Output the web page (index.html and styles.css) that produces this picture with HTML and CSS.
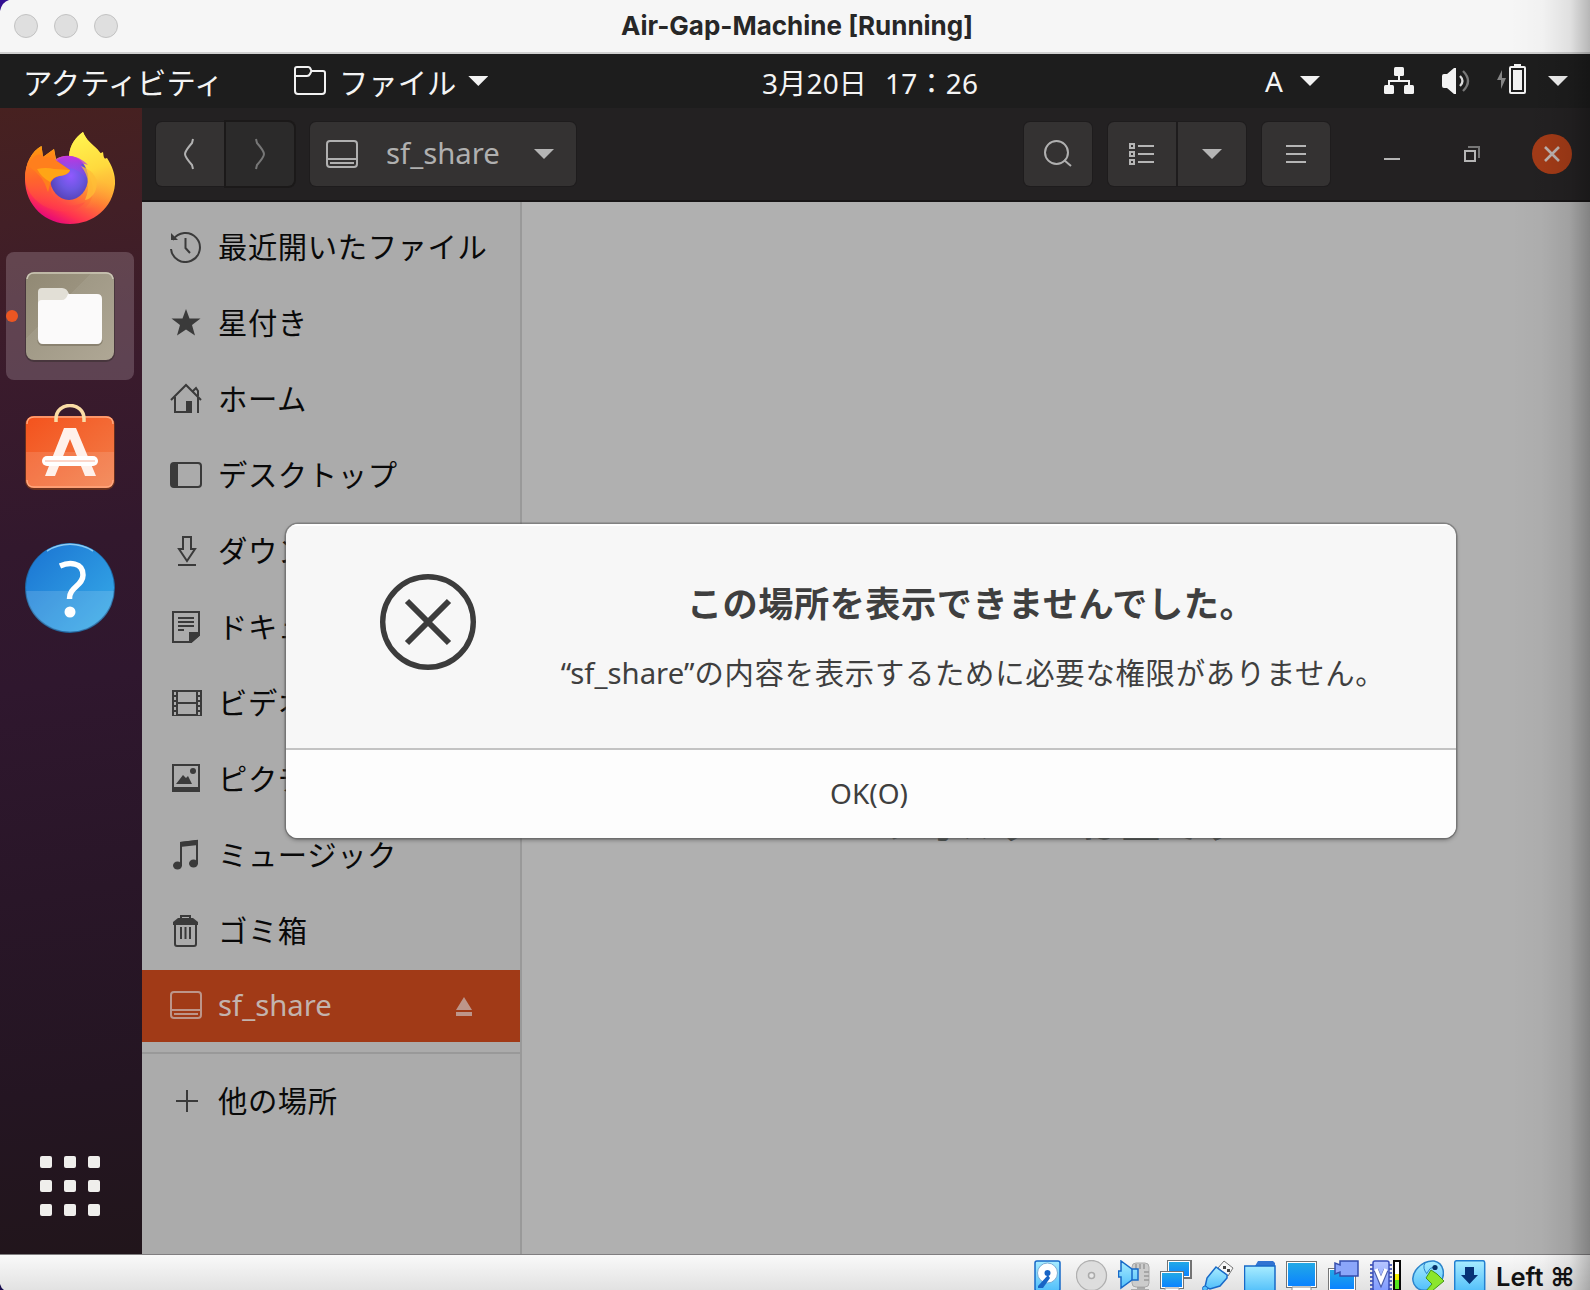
FILE: index.html
```html
<!DOCTYPE html>
<html lang="ja">
<head>
<meta charset="utf-8">
<title>Air-Gap-Machine [Running]</title>
<link rel="stylesheet" href="styles.css">
</head>
<body>
<div class="vm">
  <header class="titlebar">
    <div class="lights"><i></i><i></i><i></i></div>
    <h1>Air-Gap-Machine [Running]</h1>
  </header>

  <nav class="topbar">
    <span class="activities">アクティビティ</span>
    <div class="appmenu">
      <svg width="32" height="30" viewBox="0 0 32 30" fill="none" stroke="#f2f2f2" stroke-width="2"><path d="M1 3Q1 1 3 1H14Q16 1 16.500 3L17.500 5H29Q31 5 31 7V25Q31 28 28 28H4Q1 28 1 25ZM1 10H13Q15 10 16 8L17.500 5"/></svg>
      <span>ファイル</span>
      <b class="caret"></b>
    </div>
    <span class="clock">3月20日<em></em>17：26</span>
    <div class="input"><span>A</span><b class="caret"></b></div>
    <div class="system">
      <svg class="net" width="30" height="28" viewBox="0 0 30 28" fill="#f2f2f2"><rect x="10" width="10" height="9" rx="1.500"/><rect y="18" width="10" height="9" rx="1.500"/><rect x="20" y="18" width="10" height="9" rx="1.500"/><path d="M14 8h2v5h10v6h-2v-4H6v4H4v-6h10z"/></svg>
      <svg class="vol" width="30" height="28" viewBox="0 0 30 28" fill="none"><path d="M0 9Q0 7 2 7H5L12 1H14V27H12L5 21H2Q0 21 0 19Z" fill="#f2f2f2"/><path d="M18 9Q23 14 18 19" stroke="#ddd" stroke-width="2.300"/><path d="M21 4Q31 14 21 24" stroke="#777" stroke-width="2.300"/></svg>
      <svg class="bat" width="30" height="30" viewBox="0 0 30 30"><path d="M5 6L0 16H4V25L9 14H5Z" fill="#858585"/><path d="M17 0h7v3h-7z" fill="#f2f2f2"/><rect x="13" y="3" width="15" height="26" rx="1" fill="none" stroke="#f2f2f2" stroke-width="2"/><path d="M16 6h9v20h-9z" fill="#f2f2f2"/></svg>
      <b class="caret"></b>
    </div>
  </nav>

  <main class="desktop">
    <aside class="dock">
      <div class="tile firefox">
        <svg width="92" height="92" viewBox="0 0 92 92">
          <defs>
            <linearGradient id="ffBody" x1=".8" y1=".1" x2=".35" y2="1"><stop offset="0" stop-color="#fff04b"/><stop offset=".35" stop-color="#ffc532"/><stop offset=".6" stop-color="#ff7b34"/><stop offset=".85" stop-color="#ff3250"/><stop offset="1" stop-color="#e5067c"/></linearGradient>
            <linearGradient id="ffFlame" x1=".4" y1="0" x2=".6" y2="1"><stop offset="0" stop-color="#fff44f"/><stop offset=".5" stop-color="#ffd93d"/><stop offset="1" stop-color="#ff8b3d" stop-opacity="0"/></linearGradient>
            <linearGradient id="ffHead" x1=".2" y1="0" x2=".3" y2="1"><stop offset="0" stop-color="#ff9a0e"/><stop offset=".5" stop-color="#ff652c"/><stop offset="1" stop-color="#ff4247" stop-opacity=".3"/></linearGradient>
            <radialGradient id="ffGlobe" cx=".55" cy=".45" r=".7"><stop offset="0" stop-color="#9059ff"/><stop offset=".45" stop-color="#6b57e0"/><stop offset="1" stop-color="#4b3aa4"/></radialGradient>
            <linearGradient id="ffTop" x1="0" y1="0" x2="0" y2="1"><stop offset="0" stop-color="#c735e0"/><stop offset="1" stop-color="#9047ee" stop-opacity="0"/></linearGradient>
          </defs>
          <path d="M1 47C1 31 8 19 17.500 14L19 25L30 17L32 27Q37 24 45 24C46 12 52 5 59 0C62 8 68 12 74 18L75 22L79 20L80 27L83 26C88 34 91.500 42 91 52C89 76 69 92 46 92C22 92 1 74 1 47Z" fill="url(#ffBody)"/>
          <path d="M45 24C46 12 52 5 59 0C62 8 68 12 74 18C82 27 90 38 90 51C89 72 77 78 61 76C76 64 70 38 45 24Z" fill="url(#ffFlame)"/>
          <path d="M1 47C1 31 8 19 17.500 14L19 25L30 17L32 29L46 39L28 49C23 70 41 79 61 70C50 88 6 80 1 47Z" fill="url(#ffHead)"/>
          <ellipse cx="45" cy="46" rx="19" ry="22" fill="url(#ffGlobe)"/>
          <path d="M31 28C41 20 56 24 64 33Q58 31 57 33Q63 39 64 49Q55 36 44 36Z" fill="url(#ffTop)"/>
          <path d="M4 34Q12 17 20 25Q27 25 33 29L46 38Q45 43 35 44Q29 45 26 52L24 60Q20 44 4 34Z" fill="#ff7f1d"/>
          <path d="M13 37Q22 35 30 37L46 38Q45 43 35 44Q29 45 26 50Q17 45 13 37Z" fill="#ffa516"/>
          <path d="M57 34Q78 42 71 60Q67 67 61 68Q69 49 57 34Z" fill="#ffbd35" opacity=".75"/>
        </svg>
      </div>
      <div class="tile files active">
        <u></u>
        <svg width="90" height="92" viewBox="0 0 90 92">
          <defs><linearGradient id="fBg" x1="0" y1="0" x2="1" y2="1"><stop offset="0" stop-color="#918974"/><stop offset=".38" stop-color="#9a927e"/><stop offset=".38" stop-color="#a09986"/><stop offset="1" stop-color="#afa795"/></linearGradient></defs>
          <rect y="1" width="90" height="90" rx="9" fill="#3c2f33" opacity=".65"/>
          <rect x="1" y="1" width="88" height="88" rx="8" fill="url(#fBg)"/>
          <path d="M2 8Q3 2 9 2H81Q87 2 88 8" fill="none" stroke="#cdc7b7" stroke-width="1.500"/>
          <path d="M13 69Q14 74 18 74H71Q76 74 77 69" fill="none" stroke="#8a8270" stroke-width="2"/>
          <path d="M13 21Q13 17 17 17H37Q42 17 44 23H72V35H13Z" fill="#e2dfd6"/>
          <path d="M13 33Q13 29 17 29H37Q41 29 43 23H72Q77 23 77 28V67Q77 73 72 73H18Q13 73 13 67Z" fill="#fbfafa"/>
        </svg>
      </div>
      <div class="tile shop">
        <svg width="90" height="88" viewBox="0 0 90 88">
          <defs><linearGradient id="bag" x1="0" y1="0" x2="1" y2="1"><stop offset="0" stop-color="#f4521c"/><stop offset="1" stop-color="#f27f4b"/></linearGradient></defs>
          <rect y="12" width="90" height="74" rx="9" fill="#69301d"/>
          <rect x="1" y="12" width="88" height="72" rx="8" fill="url(#bag)"/>
          <path d="M1 48H89V76Q89 84 81 84H9Q1 84 1 76Z" fill="#fff" opacity=".12"/>
          <path d="M2 20Q2 13 9 13H81Q88 13 88 20M2 76Q2 83 9 83H81Q88 83 88 76" fill="none" stroke="#ffa77d" stroke-width="1.400"/>
          <path d="M31 18V15C31 -3 59 -3 59 15V18" fill="none" stroke="#fadca5" stroke-width="3.500"/>
          <path d="M39 24H51L71 72H60L45 35L30 72H20Z" fill="#fff1eb"/>
          <rect x="17" y="52" width="56" height="10" rx="5" fill="#fff"/>
          <path d="M20 57H70" stroke="#fbd7cb" stroke-width="2"/>
        </svg>
      </div>
      <div class="tile help">
        <svg width="90" height="92" viewBox="0 0 90 92">
          <defs><linearGradient id="hb" x1="0" y1="0" x2="1" y2="1"><stop offset="0" stop-color="#1a73d2"/><stop offset="1" stop-color="#37ade9"/></linearGradient></defs>
          <circle cx="45" cy="46" r="45" fill="#1f659e"/><circle cx="45" cy="45.500" r="44" fill="url(#hb)"/>
          <path d="M1 49H89A44 41 0 0 1 1 49Z" fill="#fff" opacity=".14"/>
          <path d="M22 9A43 43 0 0 1 68 9" fill="none" stroke="#8ccbf2" stroke-width="1.500"/>
          <path d="M35 24C44 20 58 20 58 33C58 44 44 45 44.500 57" fill="none" stroke="#fff" stroke-width="5.500"/><circle cx="45" cy="70" r="5.500" fill="#fff"/>
        </svg>
      </div>
      <div class="apps"><i></i><i></i><i></i><i></i><i></i><i></i><i></i><i></i><i></i></div>
    </aside>

    <section class="window">
      <div class="headerbar">
        <div class="btn back"><svg width="12" height="32" viewBox="0 0 12 32"><path d="M10 1L9 5Q2 13 2 16T9 27L10 31" fill="none" stroke="#b2b2b2" stroke-width="2"/></svg></div>
        <div class="btn fwd"><svg width="12" height="32" viewBox="0 0 12 32"><path d="M2 1L3 5Q10 13 10 16T3 27L2 31" fill="none" stroke="#777" stroke-width="2"/></svg></div>
        <div class="btn path">
          <svg width="32" height="28" viewBox="0 0 32 28" fill="none" stroke="#b0b0b0" stroke-width="2"><rect x="1" y="1" width="30" height="26" rx="3"/><path d="M1 19H31M4 23H28"/></svg>
          <span>sf_share</span><b class="caret"></b>
        </div>
        <div class="btn search"><svg width="28" height="28" viewBox="0 0 28 28" fill="none" stroke="#b0b0b0" stroke-width="2"><circle cx="12.500" cy="12.500" r="11.500"/><path d="M20 20L27 26"/></svg></div>
        <div class="btn list"><svg width="26" height="24" viewBox="0 0 26 24" fill="none" stroke="#b5b5b5" stroke-width="2"><path d="M1 2h4v4h-4zM1 10h4v4h-4zM1 18h4v4h-4zM9 4h16M9 12h16M9 20h16"/></svg></div>
        <div class="btn opts"><b class="caret"></b></div>
        <div class="btn menu"><svg width="20" height="20" viewBox="0 0 20 20" stroke="#b5b5b5" stroke-width="2"><path d="M0 2h20M0 10h20M0 18h20"/></svg></div>
        <div class="controls">
          <svg width="16" height="16" viewBox="0 0 16 16"><path d="M0 13h16" stroke="#b5b5b5" stroke-width="2"/></svg>
          <svg width="16" height="16" viewBox="0 0 16 16" fill="none" stroke-width="2"><path d="M4 1H15V12" stroke="#777"/><path d="M1 5h10v10h-10z" stroke="#b5b5b5"/></svg>
          <span class="close"><svg width="16" height="16" viewBox="0 0 16 16"><path d="M1 1L15 15M15 1L1 15" stroke="#bdb2ae" stroke-width="2.600"/></svg></span>
        </div>
      </div>

      <div class="panes">
        <ul class="places">
          <li><svg viewBox="0 0 32 32" fill="none" stroke="#3a3a3a" stroke-width="2"><path d="M3 9A14.500 14.500 0 1 1 1 18"/><path d="M1 2V9H8Z" fill="#3a3a3a" stroke="none"/><path d="M15.500 7V17L20 22"/></svg><span>最近開いたファイル</span></li>
          <li><svg viewBox="0 0 32 32"><path d="M16 2L19.500 11.500H30.500L22 18L25 28.500L16 22.500L7 28.500L10 18L1.500 11.500H12.500Z" fill="#3a3a3a"/></svg><span>星付き</span></li>
          <li><svg viewBox="0 0 32 32" fill="none" stroke="#3a3a3a" stroke-width="2"><path d="M1 17L16 2L31 17M5 14V29H21M28 14V30M23 8L26 5L28 8V13"/><path d="M16 18h6v12h-6z" fill="#3a3a3a" stroke="none"/></svg><span>ホーム</span></li>
          <li><svg viewBox="0 0 32 32" fill="none" stroke="#3a3a3a" stroke-width="2"><rect x="1" y="4" width="30" height="24" rx="3"/><path d="M1 5h7v22H1z" fill="#3a3a3a" stroke="none"/></svg><span>デスクトップ</span></li>
          <li><svg viewBox="0 0 32 32" fill="none" stroke="#3a3a3a" stroke-width="2"><path d="M13 2H21V14H25L17 26L9 14H13ZM8 30H26"/></svg><span>ダウンロード</span></li>
          <li><svg viewBox="0 0 32 32" fill="none" stroke="#3a3a3a" stroke-width="2"><path d="M3 1H29V24L21 31H3ZM8 7H24M8 11H24M8 15H24M8 19H14"/><path d="M20 22H29V24L21 31H20Z" fill="#3a3a3a"/></svg><span>ドキュメント</span></li>
          <li><svg viewBox="0 0 32 32" fill="none" stroke="#3a3a3a" stroke-width="2"><path d="M3 3V29M31 3V29M7 3V29M27 3V29M6 4H28M7 16H27M6 28H28"/><path d="M5 3V29M29 3V29" stroke-dasharray="2 3"/></svg><span>ビデオ</span></li>
          <li><svg viewBox="0 0 32 32"><path d="M3 2h26v25h-26z" fill="none" stroke="#3a3a3a" stroke-width="2"/><path d="M2 24h28v5H2zM6 21L13 12L16 15L18 13L22 21Z" fill="#3a3a3a"/><circle cx="23" cy="8" r="3" fill="#3a3a3a"/></svg><span>ピクチャ</span></li>
          <li><svg viewBox="0 0 32 32" fill="none" stroke="#3a3a3a" stroke-width="2"><path d="M11 27V4L27 2V25"/><path d="M10 3L28 1V6L10 8Z" fill="#3a3a3a" stroke="none"/><ellipse cx="7.500" cy="26.500" rx="4.500" ry="4" fill="#3a3a3a" stroke="none"/><ellipse cx="23.500" cy="24.500" rx="4.500" ry="4" fill="#3a3a3a" stroke="none"/></svg><span>ミュージック</span></li>
          <li><svg viewBox="0 0 32 32" fill="none" stroke="#3a3a3a" stroke-width="2"><path d="M5 9V29Q5 31 7 31H24Q26 31 26 29V9M11 12V24M15.500 12V24M20 12V24M11 4V1H20V4"/><path d="M3 10V7L8 3H23L28 7V10Z" fill="#3a3a3a" stroke="none"/></svg><span>ゴミ箱</span></li>
          <li class="selected"><svg viewBox="0 0 32 32" fill="none" stroke="#bd958a" stroke-width="2"><rect x="1" y="3" width="30" height="26" rx="3"/><path d="M1 21H31M4 25H28"/></svg><span>sf_share</span><svg class="eject" viewBox="0 0 16 20"><path d="M8 0L16 13H0ZM0 15H16V19H0Z" fill="#bd958a"/></svg></li>
          <li class="other"><svg viewBox="0 0 32 32"><path d="M6 16H28M17 5V27" stroke="#3a3a3a" stroke-width="2"/></svg><span>他の場所</span></li>
        </ul>
        <div class="content"><p>フォルダーは空です</p></div>
      </div>
    </section>

    <div class="dialog" role="alertdialog">
      <div class="message">
        <svg width="96" height="96" viewBox="0 0 96 96" fill="none" stroke="#3c3c3c"><circle cx="48" cy="48" r="45.300" stroke-width="5.400"/><path d="M27 27L69 69M69 27L27 69" stroke-width="6"/></svg>
        <div class="words">
          <h2>この場所を表示できませんでした。</h2>
          <p><span class="latin">“sf_share”</span>の内容を表示するために必要な権限がありません。</p>
        </div>
      </div>
      <div class="ok"><span>OK(O)</span></div>
    </div>
  </main>

  <footer class="statusbar">
    <svg viewBox="0 0 32 32"><defs><linearGradient id="sky" x2="0" y2="1"><stop stop-color="#a8ecff"/><stop offset="1" stop-color="#51bffa"/></linearGradient><linearGradient id="scr" x2="0" y2="1"><stop stop-color="#22a9e6"/><stop offset="1" stop-color="#0b83ff"/></linearGradient><linearGradient id="vio" x2="0" y2="1"><stop stop-color="#b8c7ff"/><stop offset="1" stop-color="#7f9bff"/></linearGradient></defs><rect x="1" y="1" width="25" height="30" rx="2" fill="url(#sky)" stroke="#1769c8" stroke-width="1.500"/><circle cx="13.500" cy="13" r="10" fill="#fff" stroke="#7dafd6"/><circle cx="13.500" cy="13" r="3" fill="#1864c5"/><path d="M4 26L14 15L16 18L9 28H4Z" fill="#1864c5"/></svg>
    <svg viewBox="0 0 32 32"><circle cx="15.500" cy="15.500" r="15" fill="#ddd" stroke="#b0b0b0" stroke-width="1.300"/><circle cx="15.500" cy="15.500" r="3" fill="#e8e8e8" stroke="#aaa" stroke-width="1.500"/></svg>
    <svg viewBox="0 0 32 32"><path d="M14 7Q14 3 18 3H27Q31 3 31 7V23Q31 27 27 27H18Q14 27 14 23Z" fill="#ccc" stroke="#aaa"/><path d="M18 4v5M22 4v5M26 4v5M26 12h5M26 16h5M26 20h5M19 28h8M13 30h18" stroke="#999" stroke-width="1.500"/><path d="M0.500 11H3V1L14 9H20V20H14L3 28V17H0.500Z" fill="url(#sky)" stroke="#1769c8" stroke-width="1.500"/><path d="M14 9V20" stroke="#1769c8" stroke-width="1.500"/></svg>
    <svg viewBox="0 0 32 32"><path d="M7 0h25v19h-9v3h-7v-3H7z" fill="#737373"/><path d="M8 1h22v16H8z" fill="#fff"/><path d="M9 2h20v14H9z" fill="url(#scr)"/><path d="M0 11h24v18H0z" fill="#737373"/><path d="M1 12h22v16H1z" fill="#fff"/><path d="M2 13h20v14H2z" fill="url(#scr)"/><path d="M5 28h14v4H5z" fill="#fff" stroke="#999"/></svg>
    <svg viewBox="0 0 32 32"><path d="M22 1L31 8L26 16L16 8Z" fill="#f6f6f6" stroke="#777"/><path d="M21 6h3v3h-3zM25 9h3v3h-3z" fill="#444"/><path d="M14 7L25 15V18L18 26L8 29L3 27L5 18Z" fill="url(#sky)" stroke="#1769c8" stroke-width="1.500"/><circle cx="3" cy="28.500" r="2.500" fill="#53bff8" stroke="#1769c8"/></svg>
    <svg viewBox="0 0 32 32"><path d="M11 6L14 1H29L31 3V9H11Z" fill="#3173d1"/><path d="M.500 6H31V32H.500Z" fill="url(#sky)" stroke="#1769c8" stroke-width="1.500"/></svg>
    <svg viewBox="0 0 32 32"><path d="M0 1h31v27H0z" fill="#737373"/><path d="M1 2h29v25H1z" fill="#fff"/><path d="M2 3h27v23H2z" fill="url(#scr)"/><path d="M6 27h19v5H6z" fill="#fff" stroke="#888"/></svg>
    <svg viewBox="0 0 32 32"><path d="M0 8h28v22H0z" fill="#777"/><path d="M1 9h26v22H1z" fill="#fff"/><path d="M2 10h24v19H2z" fill="url(#scr)"/><path d="M12 1h18v15H12v-4l-5 2V3l5 2z" fill="#8ba6fa" stroke="#354ead" stroke-width="1.500"/></svg>
    <svg viewBox="0 0 32 32"><path d="M0 5h22M0 9h22M0 13h22M0 17h22M0 21h22M0 25h22M0 29h22" stroke="#263bac" stroke-width="1.500"/><rect x="3" y="1" width="16" height="30" rx="2" fill="url(#vio)" stroke="#3b50bb" stroke-width="1.500"/><path d="M6 10L11 22L16 10" fill="none" stroke="#4a5dab" stroke-width="5"/><path d="M6 9L11 21L16 9" fill="none" stroke="#fff" stroke-width="3.500"/><path d="M23 0h8v30h-8z" fill="#080808"/><path d="M25 2h4v12h-4z" fill="#fff"/><path d="M25 14h4v6h-4z" fill="#f5f000"/><path d="M25 20h4v9h-4z" fill="#55e51d"/></svg>
    <svg viewBox="0 0 32 32"><path d="M2 24C-3 13 10 0 22 1C32 3 34 15 28 23C21 31 7 34 2 24Z" fill="url(#sky)" stroke="#2b83cb" stroke-width="1.500"/><path d="M13 3Q10 8 15 14M15 13Q18 7 22 7" fill="none" stroke="#2b83cb"/><path d="M19 10L25 14L32 21L20 31H14L20 24L14 18Z" fill="#8be62c" stroke="#46961b"/><circle cx="23" cy="7.500" r="2.600" fill="#073368"/></svg>
    <svg viewBox="0 0 32 32"><rect x=".7" y=".7" width="30" height="31" rx="2" fill="url(#sky)" stroke="#2380d0" stroke-width="1.500"/><path d="M11 7h9v8h4l-8.500 9L7 15h4z" fill="#073276"/></svg>
    <span class="hostkey">Left ⌘</span>
  </footer>
  <div class="edge"></div>
  <svg class="corner tl" width="10" height="11" viewBox="0 0 10 11"><path d="M0 0H9Q2 2 0 11Z" fill="#341092"/></svg>
  <svg class="corner bl" width="4" height="6" viewBox="0 0 4 6"><path d="M0 0Q1 4 4 6H0Z" fill="#160b4e"/></svg>
</div>
</body>
</html>
```
FILE: styles.css
```css
* { box-sizing: border-box; }
body { margin: 0; }
h1, h2, p, ul { margin: 0; padding: 0; font-weight: inherit; font-size: inherit; }
svg { display: block; flex: none; }

.vm {
  position: relative;
  width: 1590px;
  height: 1290px;
  display: flex;
  flex-direction: column;
  overflow: hidden;
  font-family: "Noto Sans", "Noto Sans CJK JP", sans-serif;
  font-size: 29.33px;
  line-height: 40px;
  white-space: nowrap;
}

/* host window title */
.titlebar {
  flex: none;
  height: 54px;
  display: grid;
  grid-template-columns: 1fr auto 1fr;
  align-items: center;
  background: #f6f6f6;
  border-bottom: 2px solid #d0d0d0;
  padding: 0 14px;
}
.lights { display: flex; gap: 16px; }
.lights i { width: 24px; height: 24px; border-radius: 50%; background: #dfdfdf; border: 1px solid #c3c3c3; }
.titlebar h1 { font: 700 26px/40px Inter, sans-serif; color: #272727; margin: -1px -2px 0 2px; }

/* guest top panel */
.caret { width: 20px; height: 10px; background: #f2f2f2; clip-path: polygon(0 0, 100% 0, 50% 100%); }
.topbar {
  flex: none;
  height: 54px;
  display: grid;
  grid-template-columns: 294px 468px 502px 120px 1fr;
  align-items: center;
  background: #1d1d1d;
  color: #f4f4f4;
}
.activities { padding: 3px 0 0 23px; }
.appmenu { display: flex; align-items: center; }
.appmenu svg { margin-top: -1px; }
.appmenu span { margin: 3px 11px 0 13px; }
.appmenu .caret { margin-left: 1px; }
.clock { display: flex; font-size: 28px; padding-top: 4px; letter-spacing: .2px; }
.clock em { width: 18px; }
.input { display: flex; align-items: center; font-size: 28px; }
.input span { width: 36px; padding-left: 1px; }
.system { display: flex; align-items: center; }
.net { margin-right: 28px; }
.vol { margin-right: 25px; }
.bat { margin-right: 21px; margin-top: -4px; }

.desktop { position: relative; flex: 1; display: flex; min-height: 0; }

/* launcher */
.dock {
  width: 142px;
  display: flex;
  flex-direction: column;
  background: linear-gradient(172deg, #472120 0, #421f26 10%, #3a1b2c 23%, #32182d 38%, #2f172e 50%, #291628 68%, #241522 85%, #21151b 100%);
}
.tile { width: 128px; height: 128px; margin: 0 0 8px 6px; display: flex; align-items: center; justify-content: center; border-radius: 8px; position: relative; }
.firefox { margin-top: 8px; padding-bottom: 4px; }
.active { background: rgba(170, 150, 160, .33); }
.tile u { position: absolute; left: 0; top: 58px; width: 12px; height: 12px; border-radius: 50%; background: #eb5622; }
.files { padding-top: 1px; }
.shop { padding-bottom: 8px; }
.apps { margin: auto 0 38px 40px; display: grid; grid-template-columns: repeat(3, 12px); gap: 12px; }
.apps i { height: 12px; background: #efeeec; border-radius: 2px; }

/* file manager */
.window { flex: 1; display: flex; flex-direction: column; }
.headerbar { height: 94px; flex: none; display: flex; align-items: center; padding-left: 14px; background: #232122; border-bottom: 2px solid #171516; }
.btn { height: 64px; width: 68px; display: flex; align-items: center; justify-content: center; background: #343232; border-radius: 6px; box-shadow: 0 0 0 1px #1e1c1d; }
.headerbar .caret { background: #b5b5b5; }
.back { width: 68px; border-radius: 6px 0 0 6px; padding-right: 2px; }
.fwd { width: 68px; margin-left: 2px; background: #2b2a2a; border-radius: 0 6px 6px 0; box-shadow: 0 0 0 2px #1b1919; }
.path { width: 266px; margin-left: 16px; justify-content: flex-start; padding-left: 16px; color: #b0b0b0; }
.path span { margin: -2px 0 0 28px; width: 148px; }
.search { margin-left: 448px; }
.list { margin-left: 16px; border-radius: 6px 0 0 6px; }
.opts { margin-left: 2px; border-radius: 0 6px 6px 0; }
.menu { margin-left: 16px; }
.controls { display: flex; align-items: center; margin-left: 54px; gap: 64px; }
.close { width: 40px; height: 40px; margin-left: -12px; border-radius: 50%; background: #a33b17; display: flex; align-items: center; justify-content: center; }

.panes { flex: 1; display: flex; }
.places { width: 380px; padding-top: 8px; list-style: none; background: #ababab; border-right: 2px solid #999; color: #090909; }
.places li { height: 76px; display: flex; align-items: center; padding: 0 48px 2px 28px; letter-spacing: .6px; }
.places li > svg { width: 32px; height: 32px; margin-right: 16px; }
.places .selected { height: 72px; background: #a13a17; color: #c3b3ad; letter-spacing: 0; }
.places .selected .eject { width: 16px; height: 20px; margin: 3px 0 0 auto; }
.places .other { margin-top: 10px; border-top: 2px solid #999; height: 96px; padding-bottom: 0; }
.content { flex: 1; background: #b0b0b0; display: flex; flex-direction: column; align-items: center; padding: 590px 0 0 10px; }
.content p { font-size: 40px; line-height: 60px; font-weight: 700; color: #505553; }

.dialog {
  position: absolute;
  left: 286px;
  top: 416px;
  width: 1170px;
  height: 314px;
  display: flex;
  flex-direction: column;
  border-radius: 12px;
  overflow: hidden;
  background: #f7f7f7;
  box-shadow: 0 0 0 1.5px rgba(90, 90, 90, .5), 0 2px 4px rgba(0, 0, 0, .35);
  color: #3f3f3f;
}
.message { flex: 1; display: flex; align-items: flex-start; padding: 50px 0 0 94px; border-top: 2px solid #fff; }
.message svg { margin-top: -2px; }
.words { margin-left: 90px; width: 812px; display: flex; flex-direction: column; align-items: center; }
.words h2 { font-size: 35.2px; font-weight: 700; letter-spacing: .5px; line-height: 50px; margin: 2px 2px 0 0; }
.words p { letter-spacing: .75px; margin: 25px 0 0 2px; }
.latin { letter-spacing: 0; }
.ok { flex: none; height: 90px; border-top: 2px solid #c3c3c3; background: #fdfdfd; display: flex; align-items: center; justify-content: center; font-size: 28px; padding: 0 4px 2px 0; }

/* host status strip */
.statusbar { flex: none; height: 36px; display: flex; gap: 10px; align-items: flex-start; padding: 5px 0 0 1034px; border-top: 1px solid #807e80; background: linear-gradient(#f9f9f9, #e2e2e2); overflow: hidden; }
.statusbar svg { width: 32px; height: 32px; }
.hostkey { font: 600 25.5px/30px Inter, "DejaVu Sans", sans-serif; color: #111; padding-top: 0; transform: translateY(2px); }

.edge { position: absolute; top: 0; right: 0; width: 80px; height: 1290px; pointer-events: none; background: linear-gradient(to right, transparent, rgba(0, 0, 0, .02) 40%, rgba(0, 0, 0, .09) 75%, rgba(0, 0, 0, .26)); }
.corner { position: absolute; left: 0; }
.tl { top: 0; }
.bl { bottom: 0; }
```
